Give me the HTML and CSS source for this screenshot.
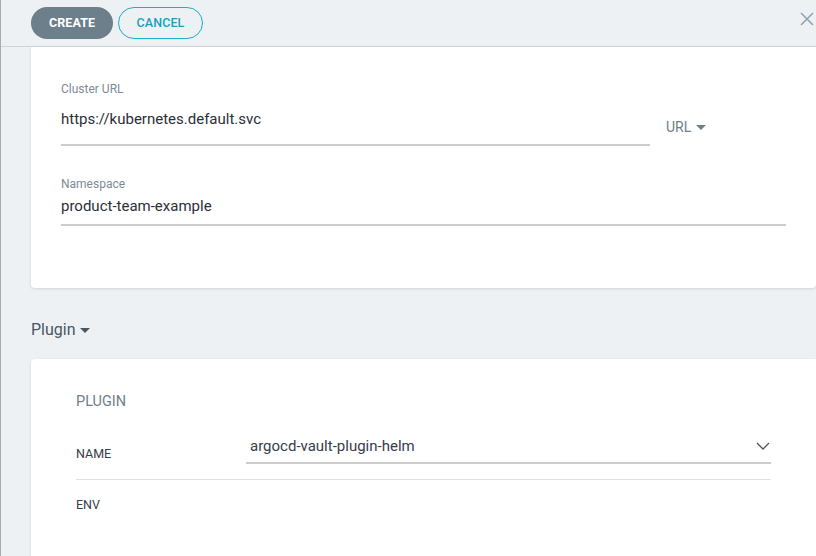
FILE: index.html
```html
<!DOCTYPE html>
<html>
<head>
<meta charset="utf-8">
<link rel="stylesheet" href="styles.css">
</head>
<body>
<div class="panel">
  <div class="topbar">
    <button class="btn btn-primary">CREATE</button>
    <button class="btn btn-outline">CANCEL</button>
    <span class="close">
      <svg width="14" height="14" viewBox="0 0 14 14"><path d="M1 1L13 13M13 1L1 13" stroke="#8fa4b1" stroke-width="1.6" fill="none"/></svg>
    </span>
  </div>
  <div class="content">
    <div class="card card-dest">
      <div class="url-row">
        <div class="field field-url">
          <div class="label">Cluster URL</div>
          <div class="input input-url">https://kubernetes.default.svc</div>
        </div>
        <div class="dropdown">URL <span class="caret caret-light"></span></div>
      </div>
      <div class="field field-ns">
        <div class="label">Namespace</div>
        <div class="input input-ns">product-team-example</div>
      </div>
    </div>
    <div class="section-title">Plugin <span class="caret"></span></div>
    <div class="card card-plugin">
      <div class="plugin-head">PLUGIN</div>
      <div class="row row-name">
        <div class="row-label">NAME</div>
        <div class="select">
          <span>argocd-vault-plugin-helm</span>
          <svg width="14" height="8" viewBox="0 0 14 8"><path d="M1 1L7 7L13 1" stroke="#495763" stroke-width="1.3" fill="none"/></svg>
        </div>
      </div>
      <div class="row row-env">
        <div class="row-label">ENV</div>
      </div>
    </div>
  </div>
</div>
</body>
</html>
```

FILE: styles.css
```css
* { box-sizing: border-box; }
html, body {
  margin: 0;
  padding: 0;
  height: 100%;
  overflow: hidden;
}
body {
  font-family: Roboto, "Liberation Sans", sans-serif;
  background: #eef1f4;
}
.panel {
  height: 556px;
  border-left: 1px solid #a7acb1;
  background: #eef1f4;
}
.topbar {
  height: 47px;
  border-bottom: 1px solid #cfd3d7;
  display: flex;
  align-items: flex-start;
  padding: 7px 0 0 30px;
  gap: 5px;
  position: relative;
}
.btn {
  height: 32px;
  border-radius: 16px;
  font-family: Roboto, "Liberation Sans", sans-serif;
  font-size: 12.5px;
  font-weight: 700;
  letter-spacing: 0.1px;
  padding-bottom: 2px;
  cursor: pointer;
}
.btn-primary {
  width: 82px;
  background: #6d7f8b;
  border: none;
  color: #fff;
}
.btn-outline {
  width: 85px;
  background: transparent;
  border: 1px solid #1aaec8;
  color: #1a9fc0;
  font-weight: 500;
}
.close {
  position: absolute;
  right: 2px;
  top: 12px;
  line-height: 0;
}
.content {
  padding-left: 30px;
}
.card {
  background: #fff;
  border-radius: 0 0 4px 4px;
  box-shadow: 0 1px 3px rgba(0, 0, 0, 0.12);
}
.card-dest {
  height: 241px;
  padding: 34px 30px 0 30px;
}
.url-row {
  display: flex;
  align-items: flex-start;
}
.field-url {
  width: 589px;
}
.label {
  font-size: 12px;
  line-height: 16px;
  color: #7d8b97;
}
.input {
  font-size: 15px;
  line-height: 20px;
  color: #2b2f38;
  border-bottom: 2px solid #cccccc;
}
.input-url {
  padding: 12px 0 15px 0;
}
.dropdown {
  margin: 37px 0 0 16px;
  font-size: 14px;
  line-height: 18px;
  color: #6d7f8b;
  display: flex;
  align-items: center;
  gap: 5px;
}
.caret {
  display: inline-block;
  width: 0;
  height: 0;
  border-left: 5px solid transparent;
  border-right: 5px solid transparent;
  border-top: 5px solid #495763;
}
.caret-light {
  border-top-color: #6d7f8b;
}
.field-ns {
  margin-top: 30px;
}
.input-ns {
  padding: 4px 0 8px 0;
}
.section-title {
  margin-top: 31px;
  font-size: 16px;
  line-height: 20px;
  color: #495763;
  display: flex;
  align-items: center;
  gap: 4px;
  padding-top: 1px;
}
.card-plugin {
  margin-top: 19px;
  height: 200px;
  border-radius: 4px 0 0 0;
  padding: 33px 45px 0 45px;
}
.plugin-head {
  font-size: 14.5px;
  line-height: 18px;
  padding-top: 1px;
  color: #6d7f8b;
}
.row {
  display: flex;
  align-items: flex-start;
}
.row-name {
  margin-top: 26px;
  border-bottom: 1px solid #dee2e6;
  height: 43px;
}
.row-label {
  width: 170px;
  font-size: 12.5px;
  line-height: 16px;
  color: #363c4a;
}
.row-name .row-label {
  padding-top: 9px;
}
.select {
  flex: 1;
  display: flex;
  justify-content: space-between;
  align-items: center;
  padding: 0 1px 7px 4px;
  border-bottom: 2px solid #cccccc;
  font-size: 15px;
  line-height: 18px;
  color: #363c4a;
}
.row-env .row-label {
  padding-top: 17px;
}
```
